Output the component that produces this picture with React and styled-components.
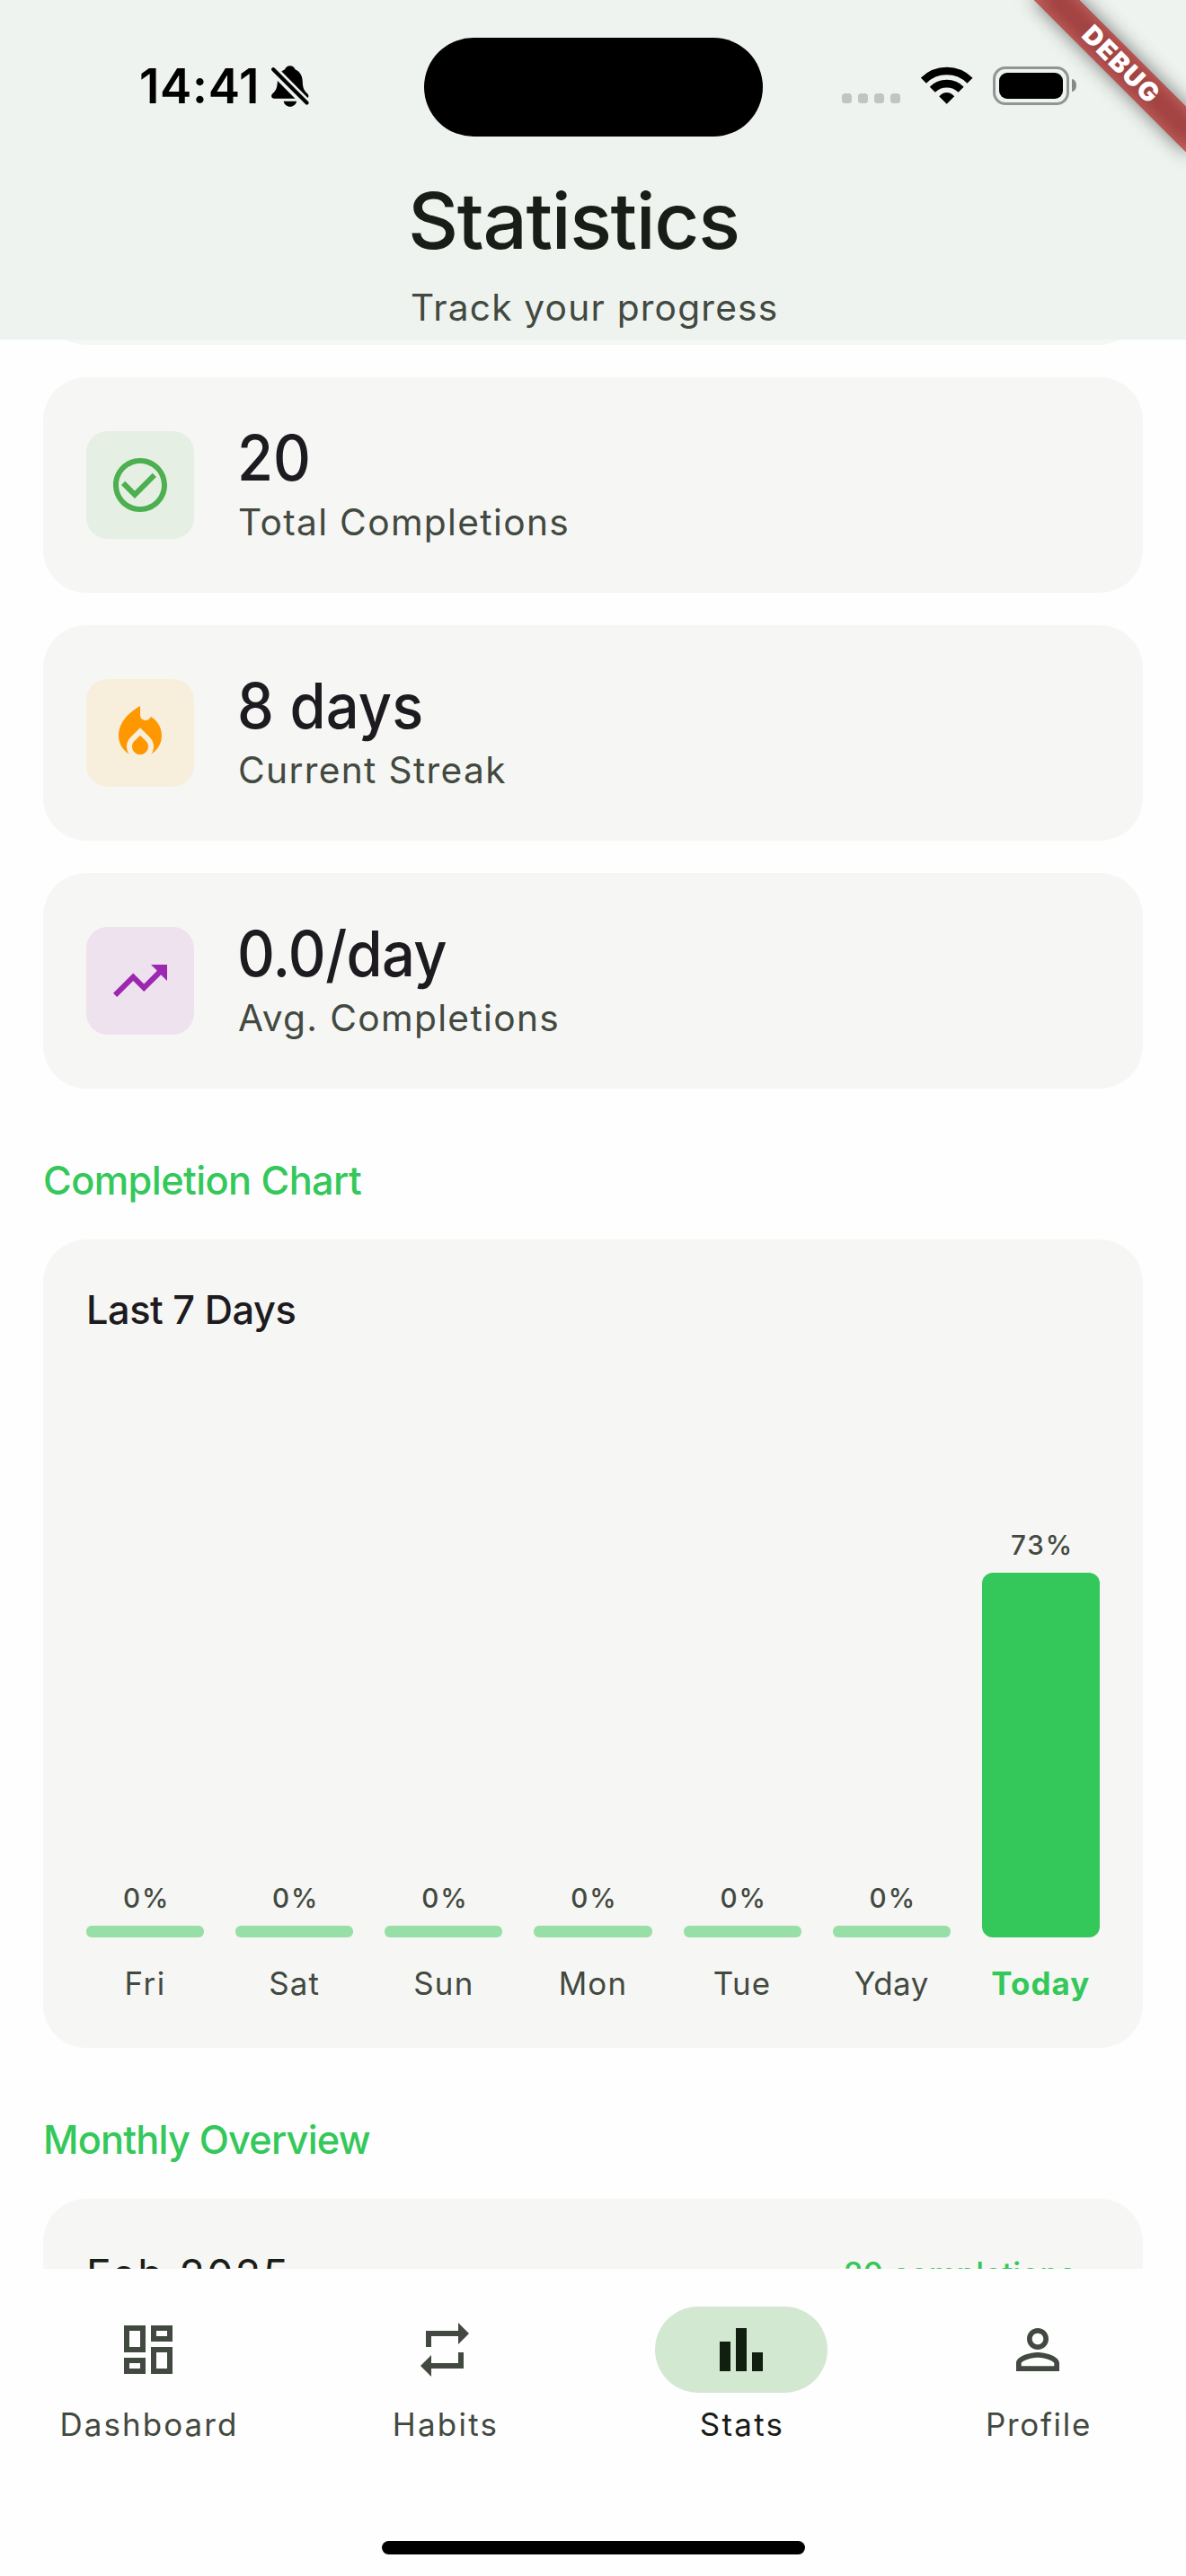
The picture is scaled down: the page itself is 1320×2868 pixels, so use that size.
import React from "react";
import styled, { createGlobalStyle } from "styled-components";

const color = {
  page: "#fefefe",
  green: "#34c85a",
  greenSoft: "#97dfa7",
  ink: "#1d1b20",
  inkGreen: "#191d17",
  muted: "#424940",
  card: "#f6f6f4",
  header: "#eef3ef",
};

const GlobalStyle = createGlobalStyle`
  * { box-sizing: border-box; }
  body {
    margin: 0;
    background: ${color.page};
    font-family: Inter, "Liberation Sans", sans-serif;
    color: ${color.ink};
  }
`;

const Screen = styled.div`
  position: relative;
  width: 1320px;
  height: 2868px;
  display: flex;
  flex-direction: column;
  overflow: hidden;
  background: ${color.page};
  white-space: nowrap;
`;

/* ---------- header ---------- */

const Header = styled.header`
  flex: none;
  height: 378px;
  display: flex;
  flex-direction: column;
  background: ${color.header};
`;

const StatusBar = styled.div`
  flex: none;
  height: 186px;
  padding-top: 42px;
  display: grid;
  grid-template-columns: 471.5px 377px 1fr;
`;

const StatusLeft = styled.div`
  height: 108px;
  display: flex;
  align-items: center;
  gap: 16px;
  padding-left: 155px;
`;

const Clock = styled.span`
  width: 130.7px;
  font-size: 53px;
  font-weight: 600;
  line-height: 60px;
  letter-spacing: 0.7px;
  color: #000000;
`;

const Island = styled.div`
  height: 110px;
  border-radius: 55px;
  background: #000000;
`;

const StatusRight = styled.div`
  height: 106px;
  display: flex;
  align-items: center;
  padding-left: 88.5px;
`;

const SignalDots = styled.div`
  display: flex;
  gap: 7px;
  margin: 29px 23px 0 0;
`;

const SignalDot = styled.span`
  width: 11px;
  height: 11px;
  border-radius: 3.5px;
  background: #c1c5c2;
`;

const BatteryShell = styled.div`
  width: 85px;
  height: 43px;
  margin-left: 22.5px;
  padding: 4px;
  border: 3px solid #929592;
  border-radius: 14px;
`;

const BatteryLevel = styled.div`
  width: 71px;
  height: 29px;
  border-radius: 9px;
  background: #000000;
`;

const BatteryTip = styled.span`
  width: 5px;
  height: 14px;
  margin-left: 3px;
  border-radius: 0 5px 5px 0 / 0 7px 7px 0;
  background: #868986;
`;

const Heading = styled.div`
  align-self: center;
  width: 408px;
  padding-top: 6px;
  display: flex;
  flex-direction: column;
  gap: 13px;
`;

const Title = styled.h1`
  margin: 0 0 0 -2px;
  font-size: 87px;
  font-weight: 530;
  line-height: 108px;
  letter-spacing: -1.4px;
  color: ${color.inkGreen};
`;

const Subtitle = styled.p`
  margin: 0;
  padding-left: 1px;
  font-size: 40.7px;
  line-height: 60px;
  letter-spacing: 1.2px;
  color: ${color.muted};
`;

/* ---------- debug ribbon ---------- */

const Ribbon = styled.div`
  position: absolute;
  left: 1128.1px;
  top: 53.9px;
  width: 240px;
  height: 36px;
  transform: rotate(45deg);

  &::before {
    content: "";
    position: absolute;
    inset: 0;
    background: rgba(0, 0, 0, 0.5);
    filter: blur(10.9px);
  }
`;

const RibbonText = styled.div`
  position: relative;
  width: 240px;
  height: 36px;
  background: rgba(183, 28, 28, 0.627);
  color: #ffffff;
  font-size: 29px;
  font-weight: 900;
  line-height: 36px;
  letter-spacing: 1.6px;
  text-align: center;
`;

/* ---------- scrolling body ---------- */

const Body = styled.main`
  flex: none;
  height: 2148px;
  padding: 0 48px;
  overflow: hidden;
`;

const StatList = styled.section`
  display: flex;
  flex-direction: column;
  gap: 36px;
  margin-top: -234.4px;
`;

const Card = styled.div`
  border-radius: 48px;
  background: ${color.card};
`;

const StatCard = styled(Card)`
  height: 240px;
  padding: 0 48px;
  display: flex;
  align-items: center;
  gap: 48px;
`;

const IconTile = styled.div`
  width: 120px;
  height: 120px;
  display: grid;
  place-items: center;
  border-radius: 24px;
  color: ${(p) => p.$tint};
  background: ${(p) => p.$tile};
`;

const StatValue = styled.div`
  font-size: 69.5px;
  font-weight: 520;
  line-height: 84px;
  letter-spacing: ${(p) => p.$tracking}px;
  transform: scaleX(0.935);
  transform-origin: left;
`;

const StatLabel = styled.div`
  padding-left: 1px;
  font-size: 40.7px;
  line-height: 60px;
  letter-spacing: 1.33px;
  color: ${color.muted};
`;

const SectionTitle = styled.h2`
  margin: 72px 0 36px;
  font-size: 43.3px;
  font-weight: 500;
  line-height: 60px;
  letter-spacing: ${(p) => p.$tracking}px;
  color: ${color.green};
`;

const ChartCard = styled(Card)`
  height: 900px;
  padding: 48px;
  display: flex;
  flex-direction: column;
  justify-content: space-between;
`;

const ChartTitle = styled.h3`
  margin: 0;
  font-size: 43.3px;
  font-weight: 500;
  line-height: 60px;
  letter-spacing: -0.46px;
`;

const Chart = styled.div`
  display: grid;
  grid-template-columns: repeat(7, 1fr);
  gap: 35px;
  align-items: end;
`;

const Day = styled.div`
  display: flex;
  flex-direction: column;
`;

const Percent = styled.span`
  padding-left: 3px;
  margin-bottom: 11px;
  text-align: center;
  font-size: 29.6px;
  font-weight: 480;
  line-height: 39px;
  letter-spacing: 1.9px;
  color: ${color.muted};
`;

const Bar = styled.div`
  border-radius: ${(p) => (p.$active ? 12 : 6)}px;
  background: ${(p) => (p.$active ? color.green : color.greenSoft)};
`;

const DayName = styled.span`
  margin-top: 27px;
  text-align: center;
  font-size: 34.9px;
  font-weight: ${(p) => (p.$active ? 700 : 400)};
  line-height: 48px;
  letter-spacing: ${(p) => p.$tracking}px;
  color: ${(p) => (p.$active ? color.green : color.muted)};
`;

const MonthCard = styled(Card)`
  height: 320px;
  padding: 48px 75px 0 48px;
  display: flex;
  justify-content: space-between;
`;

const MonthName = styled.span`
  font-size: 46.5px;
  line-height: 73px;
  letter-spacing: 2.3px;
  color: ${color.inkGreen};
`;

const MonthTotal = styled.span`
  font-size: 34.9px;
  font-weight: 500;
  line-height: 71px;
  color: ${color.green};
`;

/* ---------- bottom navigation ---------- */

const BottomNav = styled.nav`
  flex: none;
  height: 342px;
  padding: 42px 0 24px;
  display: flex;
  flex-direction: column;
  justify-content: space-between;
  align-items: center;
  background: ${color.page};
`;

const Tabs = styled.div`
  width: 100%;
  display: grid;
  grid-template-columns: repeat(4, 1fr);
`;

const Tab = styled.div`
  display: flex;
  flex-direction: column;
  align-items: center;
  gap: 11px;
`;

const Pill = styled.div`
  width: 192px;
  height: 96px;
  display: grid;
  place-items: center;
  border-radius: 48px;
  background: ${(p) => (p.$active ? "#d3e8d0" : "transparent")};
  color: ${(p) => (p.$active ? "#101f10" : color.muted)};
`;

const TabLabel = styled.span`
  padding-left: 2px;
  font-size: 34.9px;
  line-height: 48px;
  letter-spacing: ${(p) => p.$tracking}px;
  color: ${(p) => (p.$active ? color.inkGreen : color.muted)};
`;

const HomeIndicator = styled.div`
  width: 471px;
  height: 15px;
  border-radius: 7.5px;
  background: #000000;
`;

/* ---------- icons ---------- */

const Glyph = styled.svg`
  display: block;
  width: 72px;
  height: 72px;
  fill: currentColor;
`;

const paths = {
  check:
    "M16.59 7.58 10 14.17l-3.59-3.58L5 12l5 5 8-8zM12 2C6.48 2 2 6.48 2 12s4.48 10 10 10 10-4.48 10-10S17.52 2 12 2m0 18c-4.42 0-8-3.58-8-8s3.58-8 8-8 8 3.58 8 8-3.58 8-8 8",
  fire:
    "m12 12.9-2.13 2.09c-.56.56-.87 1.29-.87 2.07C9 18.68 10.35 20 12 20s3-1.32 3-2.94c0-.78-.31-1.52-.87-2.07L12 12.9zM16 6l-.44.55C14.38 8.02 12 7.19 12 5.3V2S4 6 4 13c0 2.92 1.56 5.47 3.89 6.86-.56-.79-.89-1.76-.89-2.8 0-1.32.52-2.56 1.47-3.5L12 10.1l3.53 3.47c.95.93 1.47 2.17 1.47 3.5 0 1.02-.31 1.96-.85 2.75 1.89-1.15 3.29-3.06 3.71-5.3.66-3.55-1.07-6.9-3.86-8.52z",
  trend: "m16 6 2.29 2.29-4.88 4.88-4-4L2 16.59 3.41 18l6-6 4 4 6.3-6.29L22 12V6z",
  dashboard:
    "M19 5v2h-4V5h4M9 5v6H5V5h4m10 8v6h-4v-6h4M9 17v2H5v-2h4M21 3h-8v6h8V3zM11 3H3v10h8V3zm10 8h-8v10h8V11zm-10 4H3v6h8v-6z",
  repeat: "M7 7h10v3l4-4-4-4v3H5v6h2V7zm10 10H7v-3l-4 4 4 4v-3h12v-6h-2v4z",
  bars: "M4 9h4v11H4zM16 13h4v7h-4zM10 4h4v16h-4z",
  person:
    "M12 5.9c1.16 0 2.1.94 2.1 2.1s-.94 2.1-2.1 2.1S9.9 9.16 9.9 8s.94-2.1 2.1-2.1m0 9c2.97 0 6.1 1.46 6.1 2.1v1.1H5.9V17c0-.64 3.13-2.1 6.1-2.1M12 4C9.79 4 8 5.79 8 8s1.79 4 4 4 4-1.79 4-4-1.79-4-4-4zm0 9c-2.67 0-8 1.34-8 4v3h16v-3c0-2.66-5.33-4-8-4z",
};

function Icon({ name }) {
  return (
    <Glyph viewBox="0 0 24 24">
      <path d={paths[name]} />
    </Glyph>
  );
}

function MutedBell() {
  return (
    <svg width="42" height="46" viewBox="0 0 42 46">
      <path d="M20.8.3c2.9 0 5 1.7 5.7 4C31.6 6.6 34.4 11 34.7 17c.3 8.500 2 11.200 5.200 14 2.500 2.500 1.800 5.700-1.600 5.700H3.200c-3.400 0-4.100-3.200-1.600-5.700C4.800 28.200 6.500 25.500 6.900 17c.3-6 3.100-10.400 8.200-12.700C15.800 2 17.900.3 20.800.3z" />
      <path d="M13.600 39.700h14.600c-.8 3.600-3.700 6-7.300 6s-6.500-2.400-7.300-6z" />
      <path d="M1 3.500 40 43" stroke={color.header} strokeWidth="10.500" />
      <path d="M2.200 4.200 39.500 41.600" stroke="#000" strokeWidth="4.200" strokeLinecap="round" />
    </svg>
  );
}

function Wifi() {
  return (
    <svg width="57.500" height="42" viewBox="0 0 57.500 42">
      <g fill="none" stroke="#000" strokeWidth="8.600">
        <path d="M2.900 15.700a36.500 36.500 0 0 1 51.600 0" />
        <path d="M12.800 25.700a22.500 22.500 0 0 1 31.800 0" />
      </g>
      <path d="M20.200 33.300c5-5.900 12-5.900 17 0L28.700 41.800z" />
    </svg>
  );
}

/* ---------- data ---------- */

const stats = [
  { value: "20", label: "Total Completions", icon: "check", tint: "#4caf50", tile: "#e5efe3", tracking: 0 },
  { value: "8 days", label: "Current Streak", icon: "fire", tint: "#ff9800", tile: "#f7eedc", tracking: 0.1 },
  { value: "0.0/day", label: "Avg. Completions", icon: "trend", tint: "#9c27b0", tile: "#eee2ee", tracking: -0.7 },
];

const days = [
  { name: "Fri", percent: 0, tracking: 1.4 },
  { name: "Sat", percent: 0, tracking: 1.2 },
  { name: "Sun", percent: 0, tracking: 1.2 },
  { name: "Mon", percent: 0, tracking: 1.2 },
  { name: "Tue", percent: 0, tracking: 1.2 },
  { name: "Yday", percent: 0, tracking: 0.5 },
  { name: "Today", percent: 73, tracking: 1.1, active: true },
];

const tabs = [
  { label: "Dashboard", icon: "dashboard", tracking: 2.1 },
  { label: "Habits", icon: "repeat", tracking: 2.3 },
  { label: "Stats", icon: "bars", tracking: 2.3, active: true },
  { label: "Profile", icon: "person", tracking: 1.75 },
];

const barHeight = (percent) => Math.max(12.4, (percent / 100) * 555);

export default function App() {
  return (
    <Screen>
      <GlobalStyle />
      <Header>
        <StatusBar>
          <StatusLeft>
            <Clock>14:41</Clock>
            <MutedBell />
          </StatusLeft>
          <Island />
          <StatusRight>
            <SignalDots>
              <SignalDot />
              <SignalDot />
              <SignalDot />
              <SignalDot />
            </SignalDots>
            <Wifi />
            <BatteryShell>
              <BatteryLevel />
            </BatteryShell>
            <BatteryTip />
          </StatusRight>
        </StatusBar>
        <Heading>
          <Title>Statistics</Title>
          <Subtitle>Track your progress</Subtitle>
        </Heading>
      </Header>

      <Body>
        <StatList>
          <StatCard />
          {stats.map((s) => (
            <StatCard key={s.label}>
              <IconTile $tint={s.tint} $tile={s.tile}>
                <Icon name={s.icon} />
              </IconTile>
              <div>
                <StatValue $tracking={s.tracking}>{s.value}</StatValue>
                <StatLabel>{s.label}</StatLabel>
              </div>
            </StatCard>
          ))}
        </StatList>

        <SectionTitle $tracking={-0.58}>Completion Chart</SectionTitle>
        <ChartCard>
          <ChartTitle>Last 7 Days</ChartTitle>
          <Chart>
            {days.map((d) => (
              <Day key={d.name}>
                <Percent>{d.percent}%</Percent>
                <Bar $active={d.active} style={{ height: barHeight(d.percent) }} />
                <DayName $active={d.active} $tracking={d.tracking}>
                  {d.name}
                </DayName>
              </Day>
            ))}
          </Chart>
        </ChartCard>

        <SectionTitle $tracking={-0.81}>Monthly Overview</SectionTitle>
        <MonthCard>
          <MonthName>Feb 2025</MonthName>
          <MonthTotal>20 completions</MonthTotal>
        </MonthCard>
      </Body>

      <BottomNav>
        <Tabs>
          {tabs.map((t) => (
            <Tab key={t.label}>
              <Pill $active={t.active}>
                <Icon name={t.icon} />
              </Pill>
              <TabLabel $active={t.active} $tracking={t.tracking}>
                {t.label}
              </TabLabel>
            </Tab>
          ))}
        </Tabs>
        <HomeIndicator />
      </BottomNav>

      <Ribbon>
        <RibbonText>DEBUG</RibbonText>
      </Ribbon>
    </Screen>
  );
}
